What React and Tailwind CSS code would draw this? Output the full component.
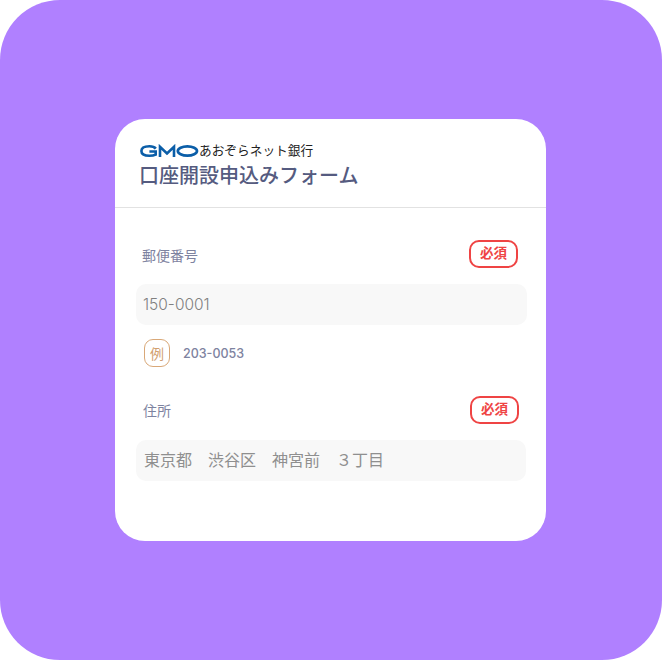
const cjk = { fontFamily: 'Inter, "Noto Sans CJK JP", sans-serif' }

function GmoLogo() {
  return (
    <svg width="59" height="14" viewBox="0 0 59 14" className="shrink-0">
      <g fill="none" stroke="#0b5ea8">
        <path strokeWidth="2.6" d="M15.8 4.6C14.6 3 12.2 2.3 9.4 2.3 4.4 2.3 1.4 4.2 1.4 7s3 4.7 8 4.7c2.7 0 4.8-.4 6.3-1.1V7.5H9.4" />
        <path strokeWidth="2.6" d="M20 13V2.8L27 9.4 34 2.8V13" />
        <ellipse cx="47.4" cy="7" rx="9.6" ry="4.7" strokeWidth="2.7" />
      </g>
    </svg>
  )
}

function RequiredBadge() {
  return (
    <span className="flex h-[28px] w-[49px] items-center justify-center rounded-[10px] border-2 border-[#ef4444] pb-px text-[13.5px] font-bold text-[#ef4444]">
      必須
    </span>
  )
}

export default function App() {
  return (
    <div className="flex h-[660px] w-[662px] items-center justify-center bg-white" style={cjk}>
      <div className="flex h-full w-full items-center justify-center rounded-[60px] bg-[#b080ff] pr-px">
        <div className="h-[422px] w-[431px] overflow-hidden rounded-[30px] bg-white">
          <header className="h-[89px] border-b border-[#e2e2e2] pl-[25px] pt-[22px]">
            <div className="flex h-[20px] items-center">
              <GmoLogo />
              <span className="text-[12.7px] leading-none text-[#222222]">あおぞらネット銀行</span>
            </div>
            <h1 className="-ml-px mt-px text-[20px] font-medium leading-[28px] text-[#555b80]">口座開設申込みフォーム</h1>
          </header>

          <div className="px-[21px] pt-[32px]">
            <div className="flex items-center justify-between pl-[6px] pr-[7px]">
              <label className="pt-[2px] text-[14px] text-[#7e83a0]">郵便番号</label>
              <RequiredBadge />
            </div>
            <div className="mt-[16px] flex h-[41px] w-[391px] items-center rounded-[10px] bg-[#f8f8f8] pl-[7px] pt-px text-[15.5px] font-light text-[#808080]">
              150-0001
            </div>
            <div className="mt-[14px] flex items-center gap-[13px] pl-[8px]">
              <span className="flex h-[28px] w-[26px] items-center justify-center rounded-[9px] border border-[#d9a878] text-[14px] text-[#d2a070]">
                例
              </span>
              <span className="pt-[2px] text-[12.5px] font-medium text-[#7e83a0]">203-0053</span>
            </div>

            <div className="mt-[29px] flex items-center justify-between pl-[7px] pr-[6px]">
              <label className="pt-[1px] text-[14px] text-[#7e83a0]">住所</label>
              <RequiredBadge />
            </div>
            <div className="mt-[16px] flex h-[41px] w-[390px] items-center rounded-[10px] bg-[#f8f8f8] pb-px pl-[8px] text-[16px] text-[#8f8f8f]">
              東京都　渋谷区　神宮前　３丁目
            </div>
          </div>
        </div>
      </div>
    </div>
  )
}
